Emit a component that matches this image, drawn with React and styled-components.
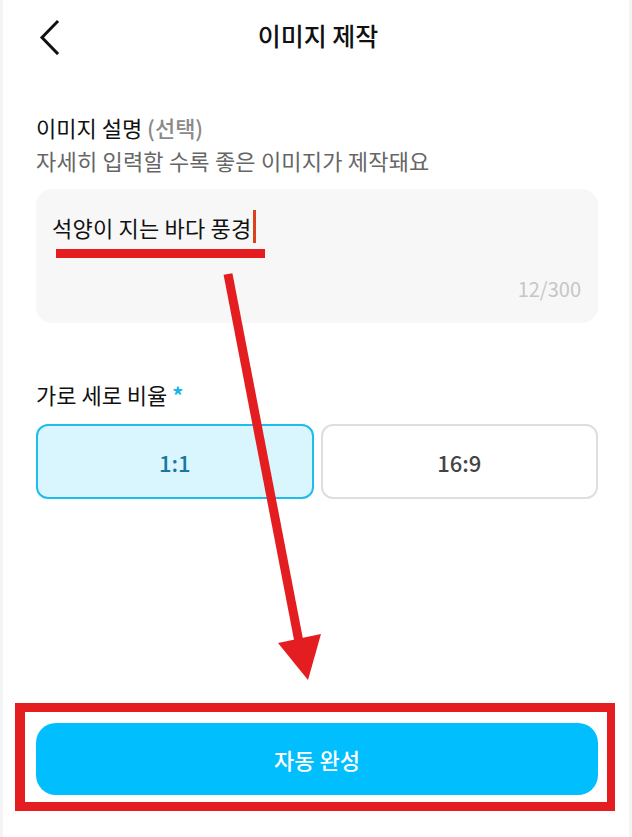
import React from "react";
import styled, { createGlobalStyle } from "styled-components";

const GlobalStyle = createGlobalStyle`
  html, body {
    margin: 0;
    padding: 0;
    background: #f4f4f4;
  }
  body {
    font-family: "Noto Sans CJK KR", "Noto Sans", sans-serif;
    color: #111;
  }
  * { box-sizing: border-box; }
`;

const Stage = styled.div`
  position: relative;
  width: 632px;
  height: 837px;
  overflow: hidden;
  background: #f4f4f4;
`;

const Page = styled.div`
  width: 626px;
  height: 837px;
  margin: 0 auto;
  background: #fff;
  display: flex;
  flex-direction: column;
  padding: 0 31px 42px 33px;
`;

const Header = styled.header`
  height: 70px;
  display: grid;
  grid-template-columns: 40px 1fr 40px;
  align-items: center;
`;

const BackButton = styled.button`
  border: none;
  background: none;
  padding: 0;
  width: 40px;
  height: 40px;
  display: flex;
  align-items: center;
  cursor: pointer;
`;

const Title = styled.h1`
  margin: 0;
  text-align: center;
  font-size: 25px;
  line-height: 30px;
  font-weight: 500;
  color: #111;
  transform: translateX(1px);
`;

const Section = styled.section`
  display: flex;
  flex-direction: column;
  margin-top: ${(p) => p.$top || 0}px;
`;

const Label = styled.div`
  font-size: 22px;
  line-height: 28px;
  font-weight: 400;
  color: #111;
`;

const Muted = styled.span`
  color: #8a8a8a;
  font-weight: 500;
`;

const Required = styled.span`
  color: #1db4e4;
  font-weight: 700;
  margin-left: 5px;
`;

const Help = styled.div`
  margin-top: 5px;
  font-size: 22px;
  line-height: 28px;
  color: #666;
  letter-spacing: 0.2px;
`;

const TextBox = styled.div`
  margin-top: 15px;
  height: 134px;
  border-radius: 16px;
  background: #f7f7f7;
  display: flex;
  flex-direction: column;
  justify-content: space-between;
  padding: 21px 17px 22px 16px;
`;

const Typed = styled.div`
  position: relative;
  display: flex;
  align-items: center;
  font-size: 22px;
  line-height: 28px;
  color: #111;
  font-weight: 400;
  letter-spacing: 0.2px;
`;

const Caret = styled.span`
  display: inline-block;
  width: 3px;
  height: 33px;
  background: #d9421a;
  margin-left: 2px;
`;

const Underline = styled.span`
  position: absolute;
  left: 4px;
  top: 39px;
  width: 209px;
  height: 9px;
  background: #e41e20;
`;

const Counter = styled.div`
  align-self: flex-end;
  font-size: 20px;
  line-height: 24px;
  color: #c6c6c6;
`;

const RatioRow = styled.div`
  margin-top: 16px;
  display: grid;
  grid-template-columns: 1fr 1fr;
  gap: 7px;
`;

const RatioOption = styled.button`
  height: 75px;
  border-radius: 12px;
  border: 2px solid ${(p) => (p.$active ? "#1dbdee" : "#dedede")};
  background: ${(p) => (p.$active ? "#d9f5fe" : "#fff")};
  color: ${(p) => (p.$active ? "#17779e" : "#444")};
  font-family: "Noto Sans CJK KR", "Noto Sans", sans-serif;
  font-size: 22px;
  font-weight: 500;
  cursor: pointer;
`;

const Bottom = styled.div`
  margin-top: auto;
  position: relative;
`;

const Submit = styled.button`
  width: 100%;
  height: 72px;
  border: none;
  border-radius: 20px;
  background: #01befe;
  color: #fff;
  font-family: "Noto Sans CJK KR", "Noto Sans", sans-serif;
  font-size: 22px;
  font-weight: 500;
  cursor: pointer;
`;

const Highlight = styled.div`
  position: absolute;
  top: -20px;
  bottom: -16px;
  left: -21px;
  right: -17px;
  border: 9px solid #e41e20;
  border-left-width: 10px;
  border-right-width: 8px;
  pointer-events: none;
`;

const ArrowLayer = styled.svg`
  position: absolute;
  left: 0;
  top: 0;
  pointer-events: none;
`;

export default function App() {
  return (
    <Stage>
      <GlobalStyle />
      <Page>
        <Header>
          <BackButton aria-label="뒤로">
            <svg width="40" height="40" viewBox="0 0 40 40">
              <polyline
                points="21,7 6,22.5 21,38"
                fill="none"
                stroke="#111"
                strokeWidth="3"
                strokeLinecap="square"
              />
            </svg>
          </BackButton>
          <Title>이미지 제작</Title>
          <span />
        </Header>

        <Section $top={43}>
          <Label>
            이미지 설명 <Muted>(선택)</Muted>
          </Label>
          <Help>자세히 입력할 수록 좋은 이미지가 제작돼요</Help>
          <TextBox>
            <Typed>
              석양이 지는 바다 풍경
              <Caret />
              <Underline />
            </Typed>
            <Counter>12/300</Counter>
          </TextBox>
        </Section>

        <Section $top={57}>
          <Label>
            가로 세로 비율<Required>*</Required>
          </Label>
          <RatioRow>
            <RatioOption $active>1:1</RatioOption>
            <RatioOption>16:9</RatioOption>
          </RatioRow>
        </Section>

        <Bottom>
          <Submit>자동 완성</Submit>
          <Highlight />
        </Bottom>
      </Page>

      <ArrowLayer width="632" height="837" viewBox="0 0 632 837">
        <line x1="228" y1="274" x2="299" y2="642" stroke="#e41e20" strokeWidth="9" />
        <polygon points="278,643 321,634 308,680" fill="#e41e20" />
      </ArrowLayer>
    </Stage>
  );
}
